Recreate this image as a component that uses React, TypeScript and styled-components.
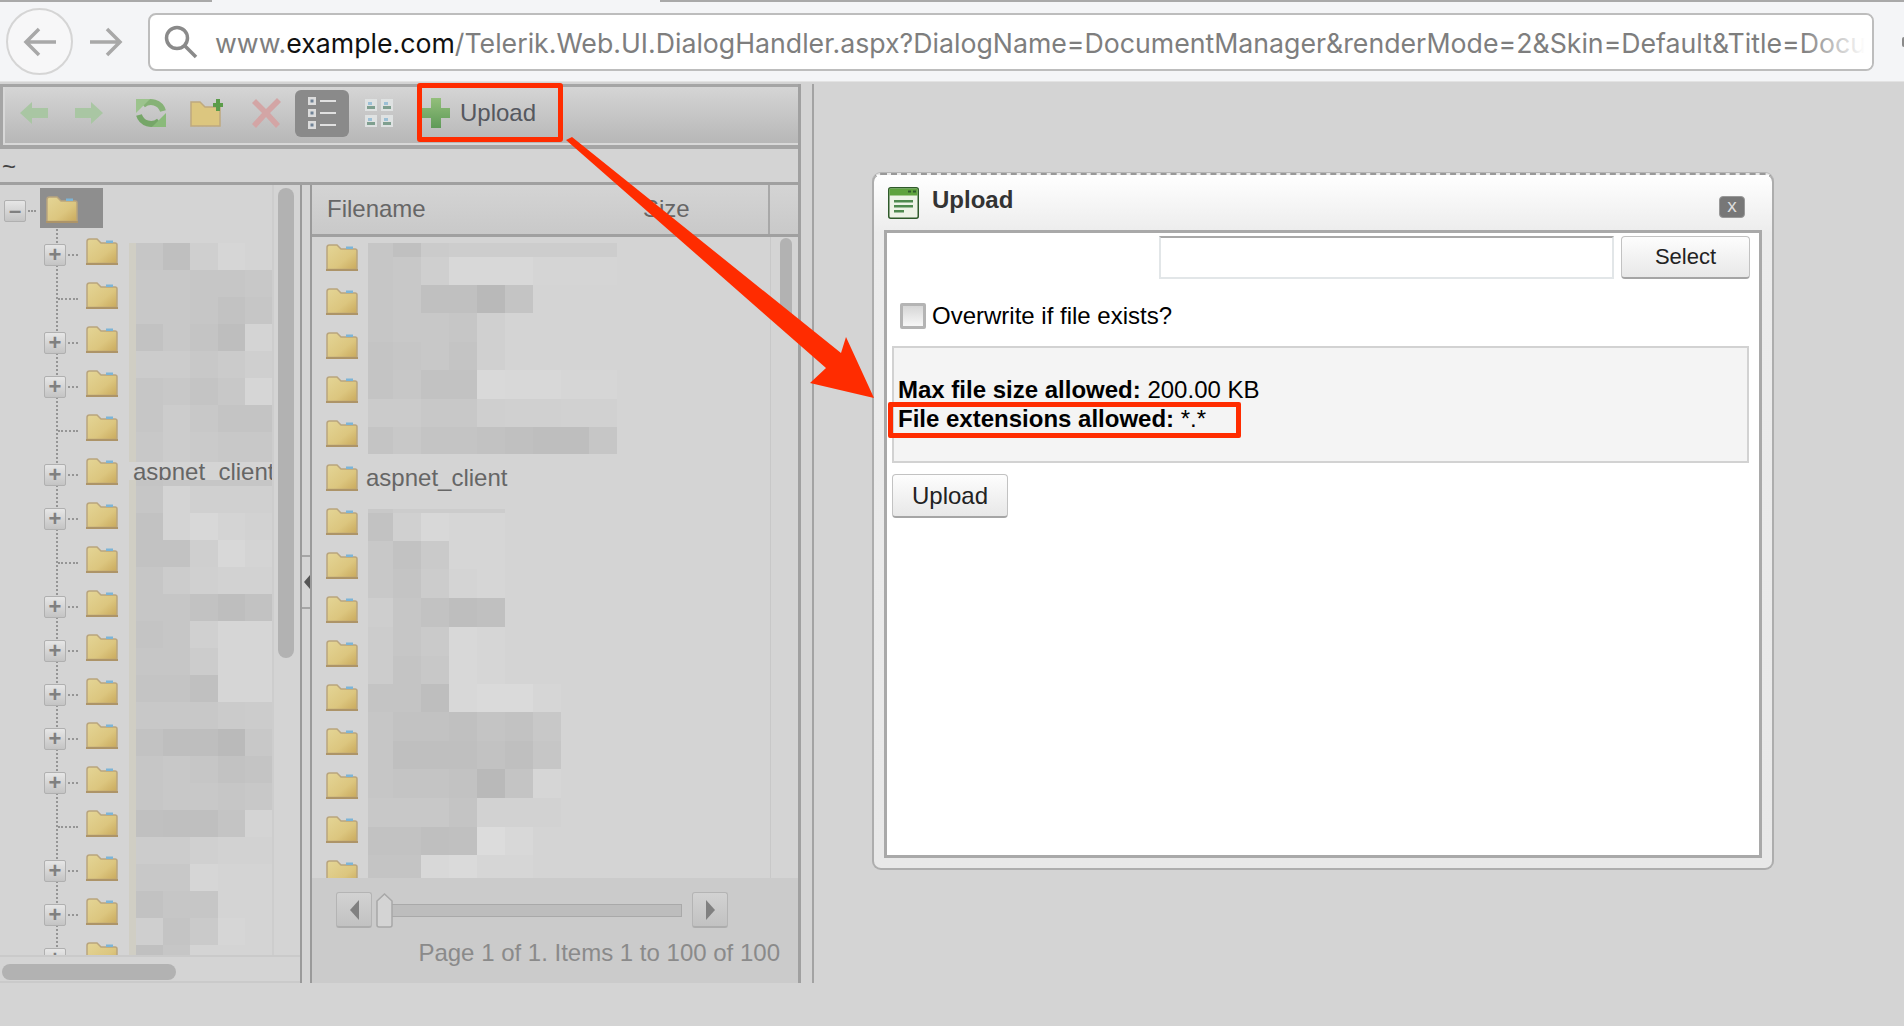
import React from "react";
import styled, { createGlobalStyle } from "styled-components";

const GlobalStyle = createGlobalStyle`
  html, body {
    margin: 0;
    padding: 0;
    background: #d4d4d4;
    overflow: hidden;
  }
  * {
    box-sizing: border-box;
  }
`;

const Page = styled.div`
  position: relative;
  width: 1904px;
  height: 1026px;
  overflow: hidden;
  background: #d4d4d4;
  font-family: "Liberation Sans", Arial, sans-serif;
  font-size: 24px;
`;

/* browser chrome */
const BrowserBar = styled.div`
  position: relative;
  height: 82px;
  display: flex;
  align-items: flex-start;
  padding: 8px 30px 0 6px;
  background: #f4f5f7;
  border-bottom: 1px solid #e3e3e3;
`;

const TabEdge = styled.div<{ $left: number; $width: number }>`
  position: absolute;
  top: 0;
  left: ${(p) => p.$left}px;
  width: ${(p) => p.$width}px;
  height: 2px;
  background: #a9a9a9;
`;

const MenuSliver = styled.div`
  position: absolute;
  top: 37px;
  right: 0;
  width: 2px;
  height: 10px;
  border-radius: 2px 0 0 2px;
  background: #8a8a8a;
`;

const BackButton = styled.div`
  width: 67px;
  height: 67px;
  flex: none;
  display: flex;
  align-items: center;
  justify-content: center;
  border: 2px solid #d5d5d5;
  border-radius: 50%;
  background: #f7f7f8;
`;

const ForwardButton = styled.div`
  width: 66px;
  height: 67px;
  flex: none;
  margin-right: 9px;
  display: flex;
  align-items: center;
  justify-content: center;
`;

const UrlBox = styled.div`
  position: relative;
  flex: 1;
  height: 58px;
  margin-top: 5px;
  display: flex;
  align-items: center;
  padding-left: 14px;
  background: #fff;
  border: 2px solid #bdbdbd;
  border-radius: 8px;
  overflow: hidden;

  &::after {
    content: "";
    position: absolute;
    top: 0;
    right: 0;
    bottom: 0;
    width: 70px;
    background: linear-gradient(to right, rgba(255, 255, 255, 0), #fff 90%);
  }
`;

const UrlText = styled.div`
  margin: 2px 0 0 17px;
  font-family: Inter, "Liberation Sans", sans-serif;
  font-size: 26.7px;
  color: #7e7e7e;
  white-space: nowrap;
`;

const UrlHost = styled.span`
  color: #111;
`;

/* page area */
const Workspace = styled.div`
  display: flex;
  align-items: flex-start;
  padding-top: 2px;
`;

const ManagerFrame = styled.div`
  width: 814px;
  height: 899px;
  flex: none;
  padding-right: 11px;
  border-right: 2px solid #a3a3a3;
`;

const Manager = styled.div`
  height: 100%;
  display: flex;
  flex-direction: column;
  border-right: 3px solid #a0a0a0;
`;

const Toolbar = styled.div`
  position: relative;
  height: 65px;
  flex: none;
  display: flex;
  align-items: center;
  padding: 0 0 6px 17px;
  border: 3px solid #a5a5a5;
  border-right-width: 0;
  border-bottom-width: 4px;
  box-shadow: inset 0 -2px 0 #d8d8d8, inset 2px 0 0 #d8d8d8;
  background: linear-gradient(#d5d5d5, #b6b6b6);
`;

const ToolIcon = styled.div<{ $width: number; $gap: number }>`
  width: ${(p) => p.$width}px;
  margin-right: ${(p) => p.$gap}px;
  flex: none;
  display: flex;
  align-items: center;
  justify-content: center;
`;

const ToolToggle = styled.div`
  width: 54px;
  height: 47px;
  flex: none;
  margin-right: 16px;
  display: flex;
  align-items: center;
  justify-content: center;
  background: #8a8a8a;
  border-radius: 6px;
`;

const ToolUpload = styled.div`
  margin-left: 29px;
  display: flex;
  align-items: center;
  gap: 10px;
  color: #55585f;
  line-height: 30px;
`;

const UploadMark = styled.div`
  position: absolute;
  top: -4px;
  left: 414px;
  width: 146px;
  height: 59px;
  border: 5px solid #ff2c00;
  border-radius: 3px;
`;

const PathRow = styled.div`
  height: 36px;
  flex: none;
  padding: 0 0 0 2px;
  font-size: 24px;
  line-height: 36px;
  color: #444;
  border-bottom: 3px solid #a0a0a0;
`;

const Panes = styled.div`
  flex: 1;
  min-height: 0;
  display: flex;
`;

const TreePane = styled.div`
  position: relative;
  width: 300px;
  flex: none;
  display: flex;
  flex-direction: column;
  overflow: hidden;
`;

const TreeMain = styled.div`
  flex: 1;
  min-height: 0;
  display: flex;
`;

const TreeBody = styled.div`
  position: relative;
  width: 272px;
  flex: none;
  overflow: hidden;

  &::before {
    content: "";
    position: absolute;
    left: 56px;
    top: 44px;
    bottom: 0;
    border-left: 2px dotted #959595;
  }
`;

const TreeRoot = styled.div`
  height: 43px;
  display: flex;
  align-items: flex-start;
  padding: 15px 0 0 4px;
`;

const RootFolder = styled.div`
  width: 63px;
  height: 40px;
  margin-top: -12px;
  padding: 8px 0 0 6px;
  background: #8e8e8e;
`;

const TreeRow = styled.div`
  position: relative;
  height: 44px;
  display: flex;
  align-items: flex-start;
  padding: 10px 0 0 44px;
`;

const Expander = styled.div`
  position: relative;
  width: 22px;
  height: 22px;
  flex: none;
  display: flex;
  align-items: center;
  justify-content: center;
  font-size: 22px;
  font-weight: bold;
  line-height: 1;
  color: #808080;
  background: linear-gradient(#e6e6e6, #c4c4c4);
  border: 1px solid #b0b0b0;
  border-radius: 2px;
`;

const ExpanderSlot = styled(Expander)`
  margin-top: 6px;
`;

const Dots = styled.div<{ $width: number; $left: number; $top: number; $right: number }>`
  width: ${(p) => p.$width}px;
  flex: none;
  margin: ${(p) => p.$top}px ${(p) => p.$right}px 0 ${(p) => p.$left}px;
  border-top: 2px dotted #959595;
`;

const TreeName = styled.div`
  align-self: center;
  margin: -6px 0 0 15px;
  color: #666;
  white-space: nowrap;
`;

const TreeGutter = styled.div`
  flex: 1;
  padding: 3px 6px 0 4px;
  border-left: 2px solid #cdcdcd;
`;

const ScrollThumb = styled.div<{ $height: number }>`
  height: ${(p) => p.$height}px;
  border-radius: 8px;
  background: #b2b2b2;
`;

const TreeFooter = styled.div`
  height: 28px;
  flex: none;
  padding: 7px 0 0 2px;
  border-top: 2px solid #cacaca;
  border-bottom: 2px solid #cacaca;
`;

const HorizontalThumb = styled.div`
  width: 174px;
  height: 16px;
  border-radius: 8px;
  background: #b2b2b2;
`;

const Splitter = styled.div`
  position: relative;
  width: 12px;
  flex: none;
  border-left: 2px solid #9a9a9a;
  border-right: 2px solid #9a9a9a;
`;

const SplitterHandle = styled.div`
  position: absolute;
  top: 370px;
  left: 0;
  right: 0;
  height: 54px;
  display: flex;
  align-items: center;
  justify-content: flex-end;
  border-top: 2px solid #a5a5a5;
  border-bottom: 2px solid #a5a5a5;
`;

const HandleArrow = styled.div`
  width: 0;
  height: 0;
  border-top: 7px solid transparent;
  border-bottom: 7px solid transparent;
  border-right: 6px solid #555;
`;

const GridPane = styled.div`
  position: relative;
  flex: 1;
  min-width: 0;
  display: flex;
  flex-direction: column;
`;

const GridHead = styled.div`
  height: 52px;
  flex: none;
  display: flex;
  align-items: stretch;
  color: #666;
  background: linear-gradient(#d4d4d4, #c9c9c9);
  border-bottom: 3px solid #a0a0a0;
`;

const HeadName = styled.div`
  width: 331px;
  flex: none;
  padding-left: 15px;
  line-height: 48px;
`;

const HeadSize = styled.div`
  width: 127px;
  flex: none;
  line-height: 48px;
  border-right: 2px solid #a8a8a8;
`;

const GridBody = styled.div`
  position: relative;
  flex: 1;
  min-height: 0;
  display: flex;
  overflow: hidden;
`;

const FileRows = styled.div`
  width: 458px;
  flex: none;
  padding: 7px 0 0 14px;
`;

const FileRow = styled.div`
  height: 44px;
  display: flex;
  align-items: flex-start;
  gap: 8px;
  color: #666;
`;

const FileName = styled.div`
  margin-top: -1px;
  line-height: 30px;
`;

const SizeColumn = styled.div`
  flex: 1;
  padding: 1px 6px 0 9px;
  border-left: 1px solid #c8c8c8;
`;

const Pager = styled.div`
  height: 105px;
  flex: none;
  padding: 14px 18px 0 24px;
  background: #cbcbcb;
`;

const PagerControls = styled.div`
  display: flex;
  align-items: center;
  height: 36px;
`;

const PagerButton = styled.div`
  width: 36px;
  height: 36px;
  flex: none;
  display: flex;
  align-items: center;
  justify-content: center;
  border: 1px solid #b4b4b4;
  border-bottom: 2px solid #adadad;
  border-radius: 3px;
  background: linear-gradient(#d2d2d2, #c2c2c2);
`;

const PagerArrow = styled.div<{ $next?: boolean }>`
  width: 0;
  height: 0;
  border-top: 10px solid transparent;
  border-bottom: 10px solid transparent;
  ${(p) =>
    p.$next ? "border-left: 9px solid #808080;" : "border-right: 9px solid #808080;"}
`;

const SliderTrack = styled.div`
  position: relative;
  width: 304px;
  height: 13px;
  flex: none;
  margin: 0 10px 0 6px;
  background: #bdbdbd;
  border: 1px solid #a9a9a9;
`;

const SliderThumb = styled.svg`
  position: absolute;
  left: -3px;
  top: -12px;
`;

const PagerText = styled.div`
  margin-top: 10px;
  text-align: right;
  color: #8a8a8a;
  line-height: 30px;
`;

const MosaicLayer = styled.svg<{ $left: number; $top: number }>`
  position: absolute;
  left: ${(p) => p.$left}px;
  top: ${(p) => p.$top}px;
  display: block;
`;

/* upload dialog */
const DialogFrame = styled.div`
  width: 902px;
  height: 697px;
  flex: none;
  margin: 89px 0 0 58px;
  display: flex;
  flex-direction: column;
  padding: 0 10px 10px;
  background: linear-gradient(#fff 0, #ececec 58px, #e8e8e8 100%);
  border: 2px solid #adadad;
  border-top: 2px dashed #999;
  border-radius: 9px;
  box-shadow: 0 -1px 0 #b5b5b5;
`;

const DialogTitle = styled.div`
  height: 55px;
  flex: none;
  display: flex;
  align-items: center;
  padding-left: 4px;
  color: #333;
  font-weight: bold;
`;

const DialogCaption = styled.div`
  flex: 1;
  margin: -6px 0 0 13px;
`;

const CloseButton = styled.div`
  width: 26px;
  height: 22px;
  display: flex;
  align-items: center;
  justify-content: center;
  margin: 9px 17px 0 0;
  padding-bottom: 3px;
  font-size: 19px;
  font-weight: normal;
  color: #ddd;
  background: #777;
  border: 1px solid #999;
  border-radius: 4px;
`;

const DialogBody = styled.div`
  flex: 1;
  min-height: 0;
  padding: 3px 9px 0 5px;
  color: #000;
  background: #fff;
  border: 3px solid #a9a9a9;
`;

const SelectRow = styled.div`
  display: flex;
  justify-content: flex-end;
  gap: 7px;
`;

const FileInput = styled.div`
  width: 455px;
  height: 43px;
  background: #fff;
  border: 2px solid #e2e6e8;
  border-top-color: #a8a8a8;
`;

const DialogButton = styled.button<{ $wide?: boolean }>`
  width: ${(p) => (p.$wide ? 129 : 116)}px;
  height: ${(p) => (p.$wide ? 43 : 44)}px;
  padding: 0;
  font-family: "Liberation Sans", Arial, sans-serif;
  font-size: ${(p) => (p.$wide ? 22 : 24)}px;
  color: #222;
  background: linear-gradient(#fdfdfd, #e8e8e8);
  border: 1px solid #c2c2c2;
  border-bottom: 2px solid #a5a5a5;
  border-radius: 4px;
`;

const OverwriteRow = styled.label`
  display: flex;
  align-items: center;
  gap: 6px;
  height: 26px;
  margin: 24px 0 0 8px;
`;

const Checkbox = styled.input`
  appearance: none;
  width: 26px;
  height: 26px;
  margin: 0;
  background: linear-gradient(#d6d6d6, #f7f7f7);
  border: 3px solid #b4b4b4;
  border-radius: 2px;
`;

const InfoBox = styled.div`
  position: relative;
  height: 117px;
  margin: 17px 1px 0 0;
  padding: 27px 0 0 4px;
  line-height: 29px;
  background: #f4f4f4;
  border: 2px solid #d2d2d2;
`;

const InfoLine = styled.div`
  white-space: nowrap;
`;

const ExtensionsMark = styled.div`
  position: absolute;
  left: -6px;
  top: 54px;
  width: 353px;
  height: 36px;
  border: 5px solid #ff2c00;
  border-radius: 2px;
`;

const UploadRow = styled.div`
  margin-top: 11px;
`;

const ArrowLayer = styled.svg`
  position: absolute;
  left: 0;
  top: 0;
  pointer-events: none;
`;

type MosaicRow = [number, string[]];

const fileColumns = [25, 28, 28, 28, 28, 28, 28, 28, 28];
const fileMosaicTop: MosaicRow[] = [
  [14, ["c6", "c0", "cb", "cd", "cd", "cd", "cd", "cd", "cd"]],
  [28, ["c6", "c8", "cf", "d8", "d8", "d8", "d5", "d5", "d5"]],
  [28, ["c6", "c8", "c0", "c0", "b9", "c4", "d4", "d4", "d4"]],
  [29, ["c6", "c8", "c8", "c6", "d0", "d4", "d4", "d4", "d4"]],
  [28, ["c4", "c6", "c8", "c4", "d0", "d4", "d4", "d4", "d4"]],
  [29, ["c4", "c7", "c2", "c2", "d9", "d8", "d8", "d6", "d6"]],
  [28, ["cb", "cb", "c8", "c8", "cf", "d0", "d0", "d1", "d1"]],
  [27, ["c4", "c8", "c4", "c4", "c2", "c0", "be", "be", "c6"]],
];
const fileMosaicBottom: MosaicRow[] = [
  [4, ["c8", "cc", "cc", "cc", "cc", "d4", "d4"]],
  [28, ["c2", "d0", "d8", "d6", "d6", "d4", "d4"]],
  [28, ["c8", "c2", "ca", "d6", "d6", "d4", "d4"]],
  [29, ["c8", "c4", "cc", "d4", "d6", "d4", "d4"]],
  [29, ["ce", "c6", "c2", "be", "c0", "d4", "d4"]],
  [29, ["cc", "c6", "ca", "d8", "d6", "d4", "d4"]],
  [28, ["cc", "c4", "c8", "d8", "d6", "d4", "d4"]],
  [28, ["c4", "c4", "be", "d8", "da", "da", "d6"]],
  [29, ["c6", "c2", "c2", "c0", "c4", "c2", "c8"]],
  [28, ["c6", "bf", "bf", "bf", "c2", "bf", "c6"]],
  [29, ["c6", "c4", "c4", "c2", "b9", "c4", "d6"]],
  [29, ["c8", "c8", "c8", "c4", "d2", "d2", "d2"]],
  [28, ["c2", "c2", "bf", "c0", "dc", "d8", "d4"]],
  [23, ["c4", "c4", "d8", "da", "d6", "d6", "d4"]],
];

const treeColumns = [27, 27, 28, 27, 27];
const treeMosaicTop: MosaicRow[] = [
  [27, ["c6", "bf", "cf", "d6", "d4"]],
  [27, ["c8", "c8", "c6", "c6", "c8"]],
  [27, ["c8", "c8", "c6", "c2", "c6"]],
  [27, ["c2", "c8", "c4", "be", "d4"]],
  [27, ["cc", "cc", "c8", "cb", "cf"]],
  [27, ["c6", "c8", "c4", "c8", "d6"]],
  [27, ["c6", "cc", "c8", "c4", "c4"]],
  [30, ["c8", "cc", "ca", "c8", "c8"]],
];
const treeMosaicBottom: MosaicRow[] = [
  [6, ["c4", "c6", "c6", "c6", "c6"]],
  [27, ["c6", "d4", "d0", "d0", "d0"]],
  [27, ["c2", "d4", "d8", "d4", "d2"]],
  [27, ["c2", "c2", "cf", "d8", "d4"]],
  [27, ["c6", "cc", "d0", "d2", "d2"]],
  [27, ["c6", "c6", "c2", "be", "c2"]],
  [27, ["c4", "c6", "d0", "d6", "d6"]],
  [27, ["c6", "c6", "cc", "d6", "d6"]],
  [27, ["c4", "c4", "c0", "d6", "d6"]],
  [27, ["c8", "c8", "c8", "cb", "cc"]],
  [27, ["c2", "be", "be", "ba", "c8"]],
  [27, ["c6", "c8", "c6", "c2", "c4"]],
  [27, ["c6", "c8", "c8", "c6", "c8"]],
  [27, ["c0", "bf", "bf", "c4", "d4"]],
  [27, ["cc", "cc", "d0", "d2", "d2"]],
  [27, ["c8", "c8", "d6", "d4", "d4"]],
  [27, ["c2", "c6", "c6", "d4", "d4"]],
  [27, ["cf", "c4", "ca", "d6", "d4"]],
  [15, ["c0", "c6", "d4", "d4", "d4"]],
];

const Mosaic = ({
  left,
  top,
  columns,
  rows,
  strip,
}: {
  left: number;
  top: number;
  columns: number[];
  rows: MosaicRow[];
  strip?: boolean;
}) => {
  const stripWidth = strip ? 7 : 0;
  const width = columns.reduce((sum, c) => sum + c, 0) + stripWidth;
  const height = rows.reduce((sum, r) => sum + r[0], 0);
  let y = 0;
  return (
    <MosaicLayer $left={left - stripWidth} $top={top} width={width} height={height}>
      {strip && <rect x={0} y={0} width={stripWidth} height={height} fill="#d0cec4" />}
      {rows.map(([h, cells], r) => {
        let x = stripWidth;
        const rowY = y;
        y += h;
        return cells.map((c, i) => {
          const cell = (
            <rect key={`${r}-${i}`} x={x} y={rowY} width={columns[i]} height={h} fill={`#${c}${c}${c}`} />
          );
          x += columns[i];
          return cell;
        });
      })}
    </MosaicLayer>
  );
};

const FolderIcon = () => (
  <svg width="32" height="27" viewBox="0 0 32 27" style={{ display: "block", flex: "none" }}>
    <defs>
      <linearGradient id="folderFill" x1="0" y1="0" x2="1" y2="1">
        <stop offset="0" stopColor="#e4d596" />
        <stop offset="0.6" stopColor="#dcc67f" />
        <stop offset="1" stopColor="#c9a95c" />
      </linearGradient>
    </defs>
    <path
      d="M1 25.5V3.5Q1 1 3.5 1H11L15 5H29Q31 5 31 7V25.5Z"
      fill="url(#folderFill)"
      stroke="#b9a57e"
      strokeWidth="1.5"
    />
    <rect x="20" y="2.5" width="7" height="2.5" fill="#7db4d6" />
    <rect x="0" y="25" width="32" height="2" fill="#ad9468" />
  </svg>
);

const GreenArrow = ({ flip }: { flip?: boolean }) => (
  <svg
    width="28"
    height="22"
    viewBox="0 0 28 22"
    style={flip ? { transform: "scaleX(-1)" } : undefined}
  >
    <path d="M0 11L12 0V6H28V16H12V22Z" fill="#a9c6a3" />
  </svg>
);

const RefreshIcon = () => (
  <svg width="32" height="32" viewBox="0 0 32 32" fill="none">
    <path d="M8 8A12.500 12.500 0 0 1 28 14" stroke="#86b276" strokeWidth="6" />
    <path d="M24 24A12.500 12.500 0 0 1 4 18" stroke="#76a668" strokeWidth="6" />
    <path d="M1 2H15L1 16Z" fill="#9cc38d" />
    <path d="M31 30H17L31 16Z" fill="#8aba7a" />
  </svg>
);

const NewFolderIcon = () => (
  <svg width="33" height="28" viewBox="0 0 33 28">
    <path d="M1 27V3H10L15 8H30V27Z" fill="#dcc67f" stroke="#bfa97f" strokeWidth="1.5" />
    <path d="M23 4H26V0H30V4H33V8H30V12H26V8H23Z" fill="#5b9c4a" />
  </svg>
);

const DeleteIcon = () => (
  <svg width="32" height="32" viewBox="0 0 32 32">
    <path d="M2 6L6 2L16 12L27 1L31 5L20 16L30 27L26 31L16 20L6 31L2 27L12 16Z" fill="#d3a5a5" />
  </svg>
);

const ListIcon = () => (
  <svg width="28" height="34" viewBox="0 0 28 34">
    {[1, 13, 25].map((y) => (
      <g key={y}>
        <rect x="0" y={y} width="8" height="8" fill="#dcdcdc" />
        <rect x="2.500" y={y + 2.500} width="3" height="3" fill="#6f8296" />
        <rect x="12" y={y + 3} width="16" height="2" fill="#e0e0e0" />
      </g>
    ))}
  </svg>
);

const ThumbnailsIcon = () => (
  <svg width="28" height="28" viewBox="0 0 28 28">
    {[
      [0, 0],
      [16, 0],
      [0, 16],
      [16, 16],
    ].map(([x, y]) => (
      <g key={`${x}-${y}`}>
        <rect x={x} y={y} width="12" height="12" fill="#dfe2e2" />
        <rect x={x + 2} y={y + 7} width="8" height="3" fill="#7f9f8f" />
        <rect x={x + 3} y={y + 3} width="4" height="3" fill="#9cc0d6" />
      </g>
    ))}
  </svg>
);

const PlusIcon = () => (
  <svg width="28" height="30" viewBox="0 0 28 30">
    <defs>
      <linearGradient id="plusFill" x1="0" y1="0" x2="0" y2="1">
        <stop offset="0" stopColor="#93bf7b" />
        <stop offset="1" stopColor="#5f9a58" />
      </linearGradient>
    </defs>
    <path d="M9 0H19V10H28V20H19V30H9V20H0V10H9Z" fill="url(#plusFill)" />
  </svg>
);

const DialogIcon = () => (
  <svg width="31" height="32" viewBox="0 0 31 32" style={{ flex: "none" }}>
    <rect x="0.750" y="0.750" width="29.500" height="30.500" rx="2" fill="#edf3e6" stroke="#2f5a2a" strokeWidth="1.500" />
    <rect x="1.500" y="1.500" width="28" height="7" fill="#5ea33d" />
    <rect x="20" y="3.500" width="3" height="2" fill="#2f5a2a" />
    <rect x="25" y="3.500" width="3" height="2" fill="#2f5a2a" />
    <rect x="6" y="13" width="19" height="2.500" fill="#4f8a4f" />
    <rect x="6" y="18" width="19" height="2.500" fill="#4f8a4f" />
    <rect x="6" y="23" width="10" height="2.500" fill="#4f8a4f" />
  </svg>
);

const treeRows = [
  true, false, true, true, false, true, true, false, true,
  true, true, true, true, false, true, true, true,
];

const App = () => {
  return (
    <Page>
      <GlobalStyle />
      <BrowserBar>
        <TabEdge $left={0} $width={212} />
        <TabEdge $left={660} $width={1244} />
        <MenuSliver />
        <BackButton>
          <svg width="34" height="30" viewBox="0 0 34 30" fill="none" stroke="#a8a8a8" strokeWidth="3.5">
            <path d="M33 15H3M16 2L3 15L16 28" />
          </svg>
        </BackButton>
        <ForwardButton>
          <svg width="34" height="30" viewBox="0 0 34 30" fill="none" stroke="#a8a8a8" strokeWidth="3.5">
            <path d="M1 15H31M18 2L31 15L18 28" />
          </svg>
        </ForwardButton>
        <UrlBox>
          <svg width="34" height="34" viewBox="0 0 34 34" fill="none" stroke="#8a8a8a" strokeWidth="3.5" style={{ flex: "none" }}>
            <circle cx="13" cy="13" r="10.5" />
            <path d="M21 21L32 32" />
          </svg>
          <UrlText>
            www.<UrlHost>example.com</UrlHost>
            /Telerik.Web.UI.DialogHandler.aspx?DialogName=DocumentManager&amp;renderMode=2&amp;Skin=Default&amp;Title=Document
          </UrlText>
        </UrlBox>
      </BrowserBar>

      <Workspace>
        <ManagerFrame>
          <Manager>
            <Toolbar>
              <ToolIcon $width={28} $gap={27}>
                <GreenArrow />
              </ToolIcon>
              <ToolIcon $width={28} $gap={32}>
                <GreenArrow flip />
              </ToolIcon>
              <ToolIcon $width={32} $gap={23}>
                <RefreshIcon />
              </ToolIcon>
              <ToolIcon $width={33} $gap={27}>
                <NewFolderIcon />
              </ToolIcon>
              <ToolIcon $width={32} $gap={13}>
                <DeleteIcon />
              </ToolIcon>
              <ToolToggle>
                <ListIcon />
              </ToolToggle>
              <ToolIcon $width={28} $gap={0}>
                <ThumbnailsIcon />
              </ToolIcon>
              <ToolUpload>
                <PlusIcon />
                Upload
              </ToolUpload>
              <UploadMark />
            </Toolbar>
            <PathRow>~</PathRow>
            <Panes>
              <TreePane>
                <TreeMain>
                  <TreeBody>
                    <TreeRoot>
                      <Expander>–</Expander>
                      <Dots $width={8} $left={2} $right={4} $top={10} />
                      <RootFolder>
                        <FolderIcon />
                      </RootFolder>
                    </TreeRoot>
                    {treeRows.map((expandable, i) => (
                      <TreeRow key={i}>
                        {expandable ? (
                          <ExpanderSlot>+</ExpanderSlot>
                        ) : (
                          <Dots $width={20} $left={14} $right={8} $top={16} />
                        )}
                        {expandable && <Dots $width={10} $left={2} $right={8} $top={16} />}
                        <FolderIcon />
                        {i === 5 && <TreeName>aspnet_client</TreeName>}
                      </TreeRow>
                    ))}
                    <Mosaic left={136} top={58} columns={treeColumns} rows={treeMosaicTop} strip />
                    <Mosaic left={136} top={295} columns={treeColumns} rows={treeMosaicBottom} strip />
                  </TreeBody>
                  <TreeGutter>
                    <ScrollThumb $height={470} />
                  </TreeGutter>
                </TreeMain>
                <TreeFooter>
                  <HorizontalThumb />
                </TreeFooter>
              </TreePane>
              <Splitter>
                <SplitterHandle>
                  <HandleArrow />
                </SplitterHandle>
              </Splitter>
              <GridPane>
                <GridHead>
                  <HeadName>Filename</HeadName>
                  <HeadSize>Size</HeadSize>
                </GridHead>
                <GridBody>
                  <FileRows>
                    {Array.from({ length: 16 }, (_, i) => (
                      <FileRow key={i}>
                        <FolderIcon />
                        {i === 5 && <FileName>aspnet_client</FileName>}
                      </FileRow>
                    ))}
                  </FileRows>
                  <SizeColumn>
                    <ScrollThumb $height={82} />
                  </SizeColumn>
                  <Mosaic left={56} top={6} columns={fileColumns} rows={fileMosaicTop} />
                  <Mosaic left={56} top={272} columns={fileColumns.slice(0, 7)} rows={fileMosaicBottom} />
                </GridBody>
                <Pager>
                  <PagerControls>
                    <PagerButton>
                      <PagerArrow />
                    </PagerButton>
                    <SliderTrack>
                      <SliderThumb width="17" height="35" viewBox="0 0 17 35">
                        <path
                          d="M1 8L8.500 1L16 8V32Q16 34 14 34H3Q1 34 1 32Z"
                          fill="#d4d4d4"
                          stroke="#a8a8a8"
                          strokeWidth="1.5"
                        />
                      </SliderThumb>
                    </SliderTrack>
                    <PagerButton>
                      <PagerArrow $next />
                    </PagerButton>
                  </PagerControls>
                  <PagerText>Page 1 of 1. Items 1 to 100 of 100</PagerText>
                </Pager>
              </GridPane>
            </Panes>
          </Manager>
        </ManagerFrame>

        <DialogFrame>
          <DialogTitle>
            <DialogIcon />
            <DialogCaption>Upload</DialogCaption>
            <CloseButton>x</CloseButton>
          </DialogTitle>
          <DialogBody>
            <SelectRow>
              <FileInput />
              <DialogButton $wide>Select</DialogButton>
            </SelectRow>
            <OverwriteRow>
              <Checkbox type="checkbox" />
              Overwrite if file exists?
            </OverwriteRow>
            <InfoBox>
              <InfoLine>
                <b>Max file size allowed:</b> 200.00 KB
              </InfoLine>
              <InfoLine>
                <b>File extensions allowed:</b> *.*
              </InfoLine>
              <ExtensionsMark />
            </InfoBox>
            <UploadRow>
              <DialogButton>Upload</DialogButton>
            </UploadRow>
          </DialogBody>
        </DialogFrame>
      </Workspace>

      <ArrowLayer width="1904" height="1026" viewBox="0 0 1904 1026">
        <path d="M566 140L572 137L841 353L846 337L874 398L810 383L826 368Z" fill="#ff2c00" />
      </ArrowLayer>
    </Page>
  );
};

export default App;
